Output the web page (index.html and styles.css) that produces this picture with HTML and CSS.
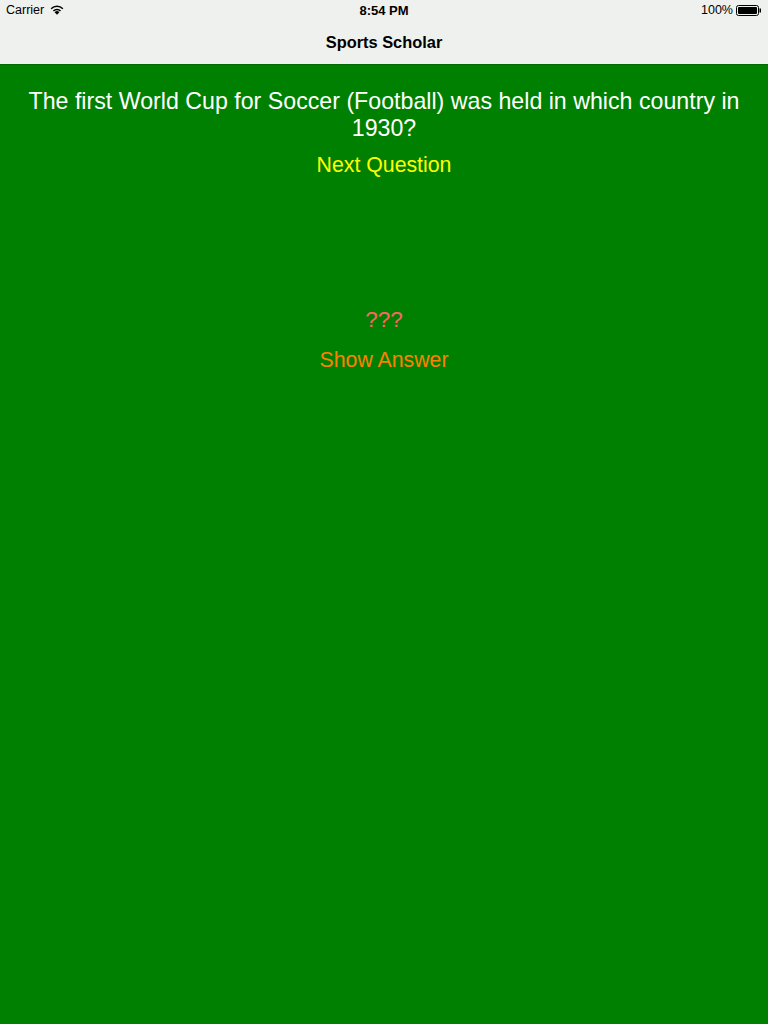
FILE: index.html
```html
<!DOCTYPE html>
<html>
<head>
<meta charset="utf-8">
<link rel="stylesheet" href="styles.css">
</head>
<body>
<div class="top">
  <div class="status">
    <div class="status-left">Carrier
      <svg class="wifi" width="14" height="10" viewBox="0 0 14 10"><path d="M7 9.8 L4.6 7.2 A3.5 3.5 0 0 1 9.4 7.2 Z" fill="#000"/><path d="M2.9 5.4 A5.8 5.8 0 0 1 11.1 5.4 L10 6.5 A4.2 4.2 0 0 0 4 6.5 Z" fill="#000"/><path d="M0.6 3.2 A9 9 0 0 1 13.4 3.2 L12.3 4.3 A7.4 7.4 0 0 0 1.7 4.3 Z" fill="#000"/></svg>
    </div>
    <div class="status-time">8:54 PM</div>
    <div class="status-right">100%
      <svg class="battery" width="26" height="11" viewBox="0 0 26 11"><rect x="0.5" y="0.5" width="22" height="10" rx="2" fill="none" stroke="#000"/><rect x="2" y="2" width="19" height="7" rx="1" fill="#000"/><rect x="23.5" y="3.5" width="1.5" height="4" fill="#000"/></svg>
    </div>
  </div>
  <div class="navbar">Sports Scholar</div>
</div>
<main class="content">
  <p class="question">The first World Cup for Soccer (Football) was held in which country in 1930?</p>
  <div class="next">Next Question</div>
  <div class="answer">???</div>
  <div class="show">Show Answer</div>
</main>
</body>
</html>
```

FILE: styles.css
```css
html, body {
  margin: 0;
  padding: 0;
  height: 100%;
}
body {
  background: #008000;
  font-family: "Liberation Sans", Arial, sans-serif;
}
.top {
  background: #eef1ed;
  border-bottom: 1px solid #006a00;
}
.status {
  height: 20px;
  display: flex;
  align-items: center;
  justify-content: space-between;
  padding: 0 6px;
  font-size: 12.5px;
  color: #000;
  position: relative;
}
.status-left {
  display: flex;
  align-items: center;
  gap: 6px;
}
.status-time {
  position: absolute;
  left: 0;
  right: 0;
  text-align: center;
  font-weight: 600;
  font-size: 13px;
}
.status-right {
  display: flex;
  align-items: center;
  gap: 3px;
}
.navbar {
  height: 44px;
  display: flex;
  align-items: center;
  justify-content: center;
  font-size: 16.4px;
  font-weight: bold;
  color: #000;
  box-sizing: border-box;
}
.content {
  display: flex;
  flex-direction: column;
  align-items: center;
  padding: 0 16px;
}
.question {
  margin: 23px 0 0;
  color: #fff;
  font-size: 23.2px;
  line-height: 27px;
  text-align: center;
}
.next {
  margin-top: 11px;
  color: #ffff00;
  font-size: 21.3px;
  line-height: 24px;
}
.answer {
  margin-top: 131px;
  color: #ff6464;
  font-size: 22.5px;
  line-height: 24px;
}
.show {
  margin-top: 16px;
  color: #ff8000;
  font-size: 21.3px;
  line-height: 24px;
}
```
